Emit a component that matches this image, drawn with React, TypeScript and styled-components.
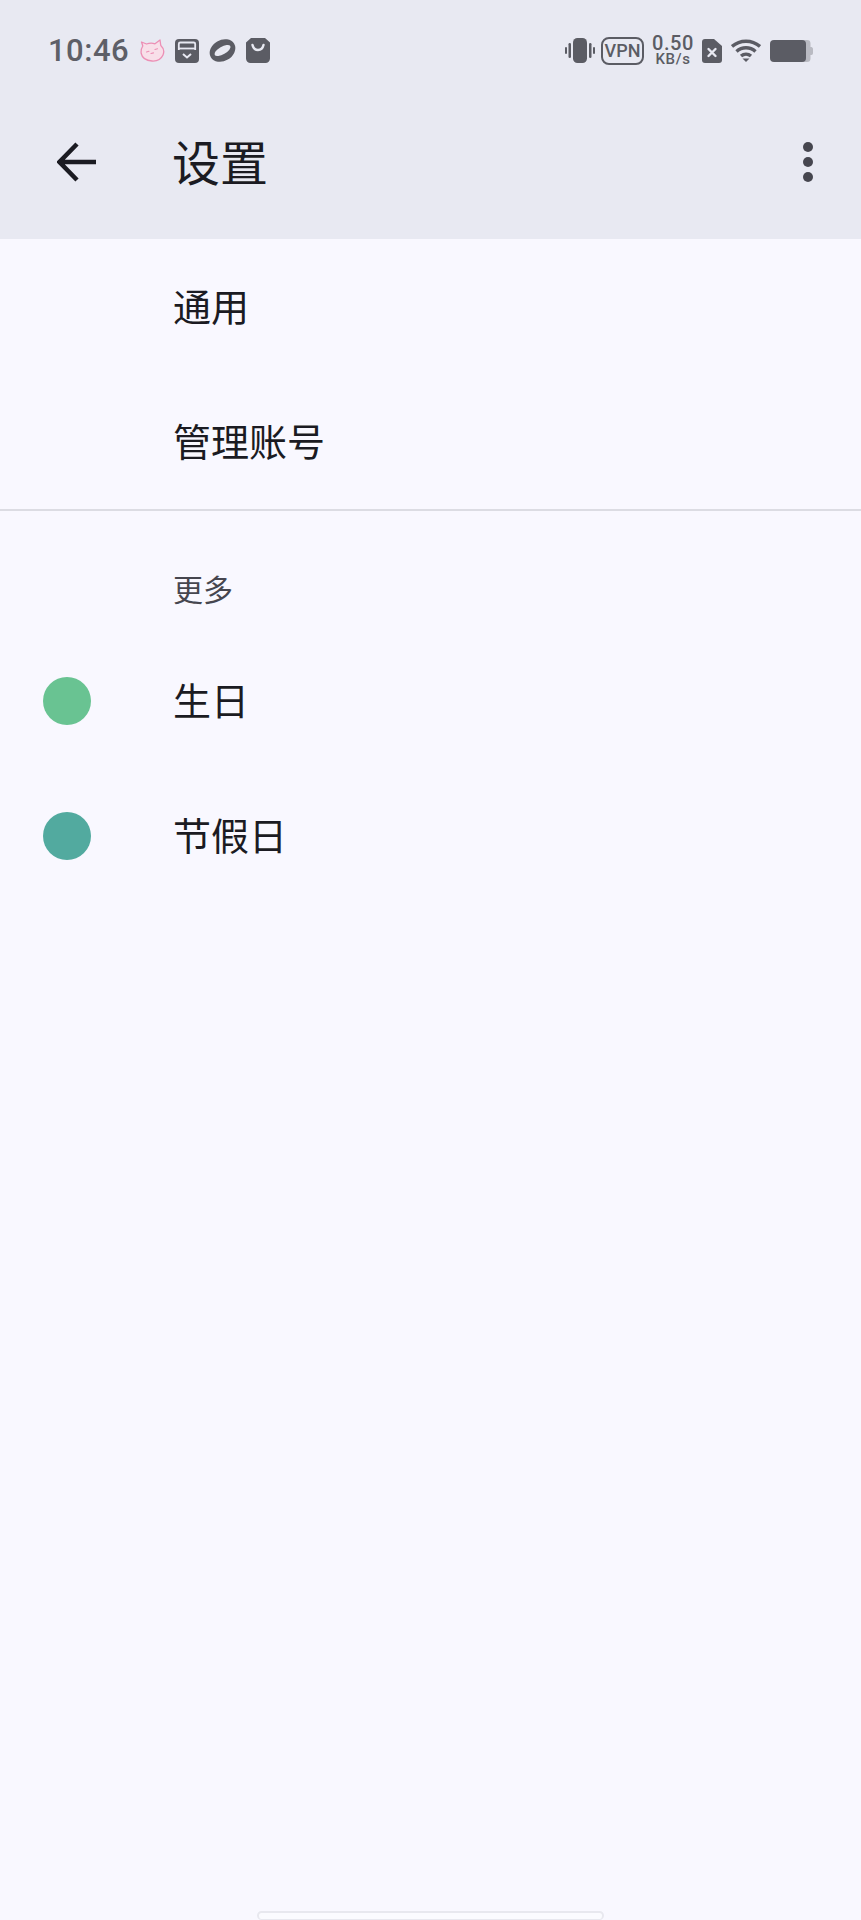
import React from "react";
import styled, { createGlobalStyle } from "styled-components";

const GlobalStyle = createGlobalStyle`
  html, body {
    margin: 0;
    padding: 0;
    background: #f9f8ff;
  }
  * {
    box-sizing: border-box;
  }
`;

const Page = styled.div`
  width: 861px;
  height: 1920px;
  display: flex;
  flex-direction: column;
  background: #f9f8ff;
  font-family: "Noto Sans CJK SC", "Noto Sans", sans-serif;
  color: #1b1b22;
  overflow: hidden;
`;

const Header = styled.header`
  height: 239px;
  display: flex;
  flex-direction: column;
  background: #e8e9f2;
`;

const StatusBar = styled.div`
  height: 101px;
  padding: 0 48px 0 48px;
  display: flex;
  align-items: center;
  justify-content: space-between;
  color: #5b5c64;
`;

const StatusGroup = styled.div<{ $gap: number }>`
  display: flex;
  align-items: center;
  gap: ${(p) => p.$gap}px;
`;

const Clock = styled.span`
  width: 80px;
  margin-right: 2px;
  font-family: Roboto, sans-serif;
  font-size: 31px;
  font-weight: 500;
  letter-spacing: 0.5px;
  color: #5e5f67;
`;

const VpnBadge = styled.span`
  width: 43px;
  height: 28px;
  margin-left: -3px;
  border: 2.5px solid #5b5c64;
  border-radius: 8px;
  display: flex;
  align-items: center;
  justify-content: center;
  font-family: Roboto, sans-serif;
  font-size: 18px;
  font-weight: 500;
`;

const NetSpeed = styled.span`
  width: 40px;
  margin-bottom: 2px;
  display: flex;
  flex-direction: column;
  align-items: center;
  font-family: Roboto, sans-serif;
  font-weight: 500;
`;

const SpeedValue = styled.span`
  font-size: 20px;
  line-height: 18px;
  letter-spacing: 0.6px;
`;

const SpeedUnit = styled.span`
  font-size: 15px;
  line-height: 14px;
  letter-spacing: 0.6px;
`;

const Toolbar = styled.div`
  flex: 1;
  padding: 0 0 17px 57px;
  display: flex;
  align-items: center;
`;

const BackIcon = styled.svg`
  width: 40px;
  height: 40px;
  margin-right: 75px;
`;

const Title = styled.h1`
  flex: 1;
  margin: 0 0 3px;
  font-size: 48px;
  font-weight: 400;
  line-height: 60px;
`;

const MoreIcon = styled.svg`
  width: 12px;
  height: 40px;
  margin-right: 47px;
`;

const Row = styled.div`
  height: 135px;
  padding-left: 43px;
  display: flex;
  align-items: center;
`;

const Dot = styled.span<{ $color: string }>`
  width: 48px;
  height: 48px;
  border-radius: 50%;
  background: ${(p) => p.$color};
`;

const Label = styled.span<{ $indented?: boolean }>`
  margin: 0 0 3px ${(p) => (p.$indented ? 130 : 82)}px;
  font-size: 38px;
  line-height: 48px;
  color: #1b1b22;
`;

const Divider = styled.div`
  height: 2px;
  background: #dcdce3;
`;

const SectionTitle = styled.div`
  height: 122px;
  padding: 57px 0 0 173px;
  font-size: 30px;
  line-height: 40px;
  color: #46464f;
`;

const HomeArea = styled.div`
  flex: 1;
  display: flex;
  align-items: flex-end;
  justify-content: center;
`;

const HomeBar = styled.div`
  width: 347px;
  height: 9px;
  border: 2px solid #e8e8ef;
  border-bottom-width: 1px;
  border-radius: 5px;
  background: #fbfbff;
`;

const CatIcon = () => (
  <svg width="25" height="23" viewBox="0 0 25 23" fill="none" stroke="#ec8fb5" strokeWidth="1.3" strokeLinejoin="round">
    <path
      d="M1.500 3 6.500 5C9.500 4 12.500 4 15 4.800L20 1 20.800 6.500C23.500 9 24.500 12.500 23 16 21 20.500 17 22.300 12 22 7 21.700 2.300 19.500 1.200 14.500 .8 11.500 1.500 9 2.800 7Z"
      fill="#f8dfe9"
    />
    <path d="M6.500 13l2.500-.8M15 10.500l2.500-.8M11 14.500l2.500-.6" strokeWidth="1.100" strokeLinecap="round" />
  </svg>
);

const BoxIcon = () => (
  <svg width="24" height="24" viewBox="0 0 24 24">
    <rect width="24" height="24" rx="4" fill="#5b5c64" />
    <path d="M3.800 11V5A1.500 1.500 0 0 1 5.300 3.500h13.400A1.500 1.500 0 0 1 20.200 5v6" fill="none" stroke="#e8e9f2" strokeWidth="1.800" />
    <path d="M3.800 9.500h16.400" stroke="#e8e9f2" strokeWidth="1.800" />
    <path d="M8 15l4 3.500 4-3.500" fill="none" stroke="#e8e9f2" strokeWidth="2" />
  </svg>
);

const PlanetIcon = () => (
  <svg width="27" height="23" viewBox="0 0 27 23">
    <ellipse cx="13.500" cy="11.500" rx="13.500" ry="10.500" transform="rotate(-30 13.500 11.500)" fill="#5b5c64" />
    <ellipse cx="13.500" cy="11.500" rx="9" ry="3.800" transform="rotate(-30 13.500 11.500)" fill="#e8e9f2" />
  </svg>
);

const BagIcon = () => (
  <svg width="24" height="25" viewBox="0 0 24 25">
    <path fill="#5b5c64" d="M5 0h14l5 4.500v16A4.500 4.500 0 0 1 19.500 25h-15A4.500 4.500 0 0 1 0 20.500v-16Z" />
    <path d="M6.500 7c.8 3.500 2.800 5 5.500 5s4.700-1.500 5.500-5" fill="none" stroke="#e8e9f2" strokeWidth="2.400" strokeLinecap="round" />
  </svg>
);

const VibrateIcon = () => (
  <svg width="30" height="25" viewBox="0 0 30 25" fill="#5b5c64">
    <rect x="8" y="0" width="14" height="25" rx="4.500" />
    <rect x="0" y="9" width="2" height="7" rx="1" />
    <rect x="3.500" y="5" width="2.500" height="15" rx="1.200" />
    <rect x="24" y="5" width="2.500" height="15" rx="1.200" />
    <rect x="28" y="9" width="2" height="7" rx="1" />
  </svg>
);

const SimIcon = () => (
  <svg width="20" height="24" viewBox="0 0 20 24">
    <path fill="#5b5c64" d="M3 0h9l8 7v14a3 3 0 0 1-3 3H3a3 3 0 0 1-3-3V3a3 3 0 0 1 3-3Z" />
    <path d="M6.500 10l7 7M13.500 10l-7 7" stroke="#e8e9f2" strokeWidth="2.400" strokeLinecap="round" />
  </svg>
);

const WifiIcon = () => (
  <svg width="30" height="23" viewBox="0 0 30 23" fill="none" stroke="#5b5c64" strokeWidth="3.400">
    <path d="M1 7.500C9 .5 21 .5 29 7.500" />
    <path d="M5.500 12.500C11 7.500 19 7.500 24.500 12.500" />
    <path d="M10 17C13 14.500 17 14.500 20 17" />
    <path d="M11.500 19.500h7L15 23Z" fill="#5b5c64" stroke="none" />
  </svg>
);

const BatteryIcon = () => (
  <svg width="43" height="22" viewBox="0 0 43 22">
    <path fill="#b9bac2" d="M30 0h7a3.500 3.500 0 0 1 3.500 3.500V7h1a2 2 0 0 1 1.500 2v4a2 2 0 0 1-1.500 2h-1v3.500A3.500 3.500 0 0 1 37 22h-7Z" />
    <rect width="36" height="22" rx="4" fill="#5b5c64" />
  </svg>
);

const generalRows = ["通用", "管理账号"];
const moreRows = [
  { label: "生日", color: "#69c392" },
  { label: "节假日", color: "#52aa9f" },
];

export default function App() {
  return (
    <Page>
      <GlobalStyle />
      <Header>
        <StatusBar>
          <StatusGroup $gap={10}>
            <Clock>10:46</Clock>
            <CatIcon />
            <BoxIcon />
            <PlanetIcon />
            <BagIcon />
          </StatusGroup>
          <StatusGroup $gap={9}>
            <VibrateIcon />
            <VpnBadge>VPN</VpnBadge>
            <NetSpeed>
              <SpeedValue>0.50</SpeedValue>
              <SpeedUnit>KB/s</SpeedUnit>
            </NetSpeed>
            <SimIcon />
            <WifiIcon />
            <BatteryIcon />
          </StatusGroup>
        </StatusBar>
        <Toolbar>
          <BackIcon viewBox="0 0 40 40" fill="none" stroke="#1b1b22" strokeWidth="4.500">
            <path d="M39 20H3.500M20 2 2.500 20 20 38" />
          </BackIcon>
          <Title>设置</Title>
          <MoreIcon viewBox="0 0 12 40" fill="#46464f">
            <circle cx="6" cy="5" r="5" />
            <circle cx="6" cy="20" r="5" />
            <circle cx="6" cy="35" r="5" />
          </MoreIcon>
        </Toolbar>
      </Header>
      {generalRows.map((label) => (
        <Row key={label}>
          <Label $indented>{label}</Label>
        </Row>
      ))}
      <Divider />
      <SectionTitle>更多</SectionTitle>
      {moreRows.map((row) => (
        <Row key={row.label}>
          <Dot $color={row.color} />
          <Label>{row.label}</Label>
        </Row>
      ))}
      <HomeArea>
        <HomeBar />
      </HomeArea>
    </Page>
  );
}
